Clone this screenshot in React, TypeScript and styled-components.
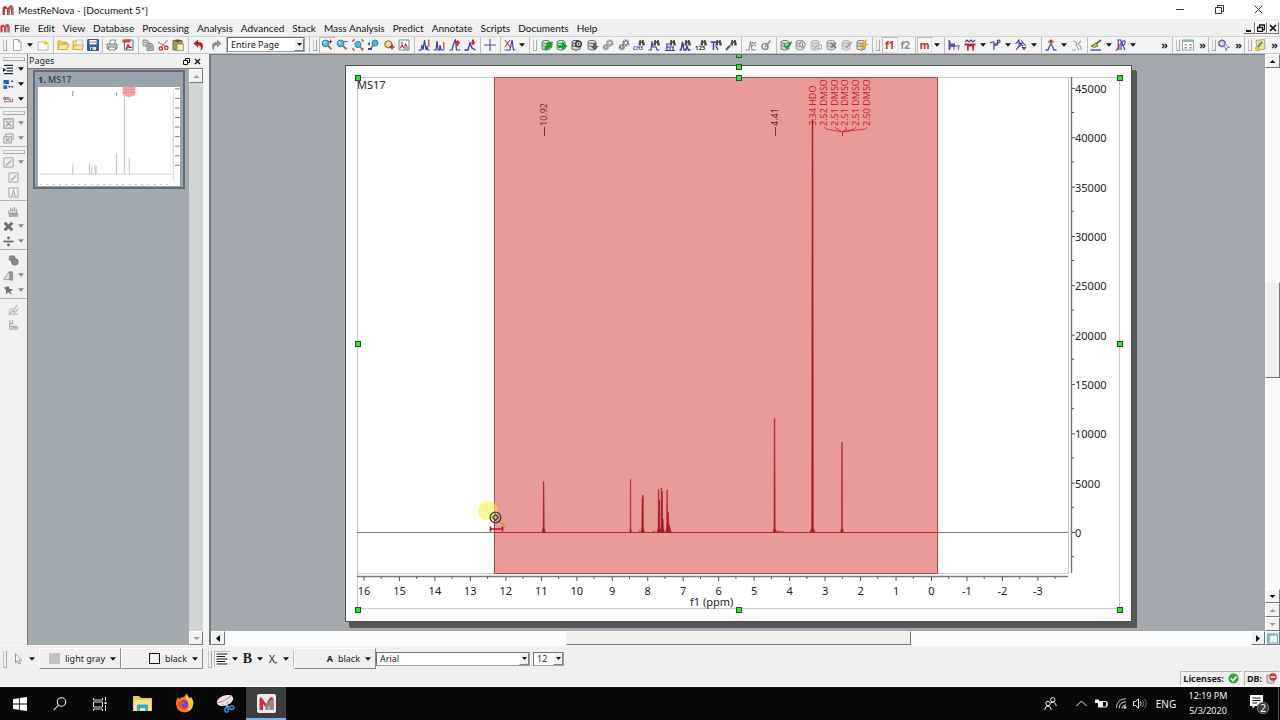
import React from "react";
import styled, { createGlobalStyle, css } from "styled-components";

const Global = createGlobalStyle`
  * { box-sizing: border-box; }
  html, body, #root { height: 100%; }
  body { margin: 0; background: #f0f0f0; color: #1c1c1c; font: 10px/14px "Noto Sans", "Open Sans", sans-serif; overflow: hidden; }
  button, select { font: inherit; color: inherit; margin: 0; padding: 0; border: 0; background: none; }
  svg { display: block; flex: none; }
`;

const BLUE = "#3b3ba8";
const RED = "#c8202a";
const GRAY = "#8d8d8d";
const GREEN = "#1f9c34";

/* ---------- icons ---------- */

const peak = "M0.5 11H3L4 6L5 11L6.5 1L8 11L9 8L10 11H11.5";
const Db = ({ c = "#8c9196" }: { c?: string }) => (
  <g fill="#d9dcde" stroke={c} strokeWidth="0.9">
    <path d="M1 3V10Q5 12.5 9 10V3" />
    <ellipse cx="5" cy="3" rx="4" ry="1.6" />
    <path d="M1 6.5Q5 8.5 9 6.5" fill="none" />
  </g>
);
const Binoc = () => (
  <g fill="#474a4e">
    <path d="M5.5 5L6.5 1H8L8.3 2.5H8.9L9.2 1H10.6L11.8 5V6.5H9.2V4H8V6.5H5.5Z" />
  </g>
);
const Lens = ({ x = 4.6, y = 4.4 }: { x?: number; y?: number }) => (
  <g>
    <path d={`M${x + 2.5} ${y + 2.5}L${x + 6} ${y + 6}`} stroke="#b5622c" strokeWidth="2" />
    <circle cx={x} cy={y} r="3.4" fill="#48bfe0" stroke="#2580a8" />
    <circle cx={x - 1} cy={y - 1} r="1.2" fill="#bdeefa" />
  </g>
);
const Gear = ({ c = GRAY }: { c?: string }) => (
  <g fill="none" stroke={c}>
    <circle cx="7.8" cy="4" r="2.4" strokeWidth="2.4" strokeDasharray="1.8 0.5" />
    <circle cx="3.8" cy="8.2" r="1.9" strokeWidth="2.4" strokeDasharray="1.6 0.4" />
  </g>
);
const line = (d: string, c: string, w = 1.1) => <path d={d} fill="none" stroke={c} strokeWidth={w} />;

const icons: Record<string, React.ReactNode> = {
  doc: <path d="M2.5 0.5H7.5L10 3V11.5H2.5Z M7.5 0.5V3H10" fill="#fff" stroke="#a5a5a5" />,
  newPage: <g><path d="M1 3H9L11 5V11H1Z" fill="#fff" stroke="#b5b5b5" /><path d="M8.5 0.5L9.3 3L11.8 3.4L9.6 5L8.5 7L7.4 5L5.3 3.4L7.7 3Z" fill="#f5d020" /></g>,
  open: <g stroke="#c79a28" strokeWidth="0.8"><path d="M1 10.5V2H4.5L5.5 3.5H10V5" fill="#f7d45a" /><path d="M1 10.5L2.5 5H11.6L10.2 10.5Z" fill="#fbe692" /></g>,
  openRecent: <g stroke="#c79a28" strokeWidth="0.8"><path d="M1 10.5V2H4.5L5.5 3.5H10V5" fill="#f7e08a" /><path d="M1 10.5L2.5 6H11.6L10.2 10.5Z" fill="#fbe692" /><path d="M4.5 1H10V6H4.5Z" fill="#f4f4f0" stroke="#bbb" /></g>,
  save: <g><path d="M0.7 0.7H11.3V11.3H0.7Z" fill="#2d66a8" stroke="#1c4477" /><path d="M2.5 1H9.5V5.5H2.5Z" fill="#fff" /><path d="M3 3H9" stroke="#d26a5a" /><path d="M3 8H9V11H3Z" fill="#dde6ee" /><path d="M4 8.5H5.5V11H4Z" fill="#24507f" /></g>,
  print: <g stroke="#787c80" strokeWidth="0.9"><path d="M3.5 5L4.5 1H9.5L8.5 5" fill="#fff" /><path d="M1 5H11V9.5H1Z" fill="#c3c7ca" /><path d="M2.5 8H9.5V11H2.5Z" fill="#eee" /></g>,
  pdf: <g><path d="M2.5 1H11V11H2.5Z" fill="#fff" stroke="#4b6f9f" /><path d="M0.5 0.5H8.5V3.5H0.5Z" fill="#cf4436" />{line("M4 10Q6 6 6 5Q7 9 10 8.5Q6 8 4 10", RED)}</g>,
  copy: <g stroke="#777" strokeWidth="0.8"><path d="M1 1H5L7 3V7H1Z" fill="#d5d5d5" /><path d="M5 4.5H9.5L11.3 6.5V11.5H5Z" fill="#b9b9b9" /><path d="M6.5 7H9.5M6.5 9H9.5M2.5 3.5H5" /></g>,
  cut: <g fill="none">{line("M1 3L9 8M10.5 1L4.5 8", "#a7878a")}<circle cx="9.3" cy="8.8" r="1.7" stroke={RED} strokeWidth="1.2" /><circle cx="3.8" cy="9.5" r="1.7" stroke={RED} strokeWidth="1.2" /></g>,
  paste: <g><path d="M1 1.5H10V11H1Z" fill="#a79a52" stroke="#6f6a3c" /><path d="M3.5 0.5H7.5V3H3.5Z" fill="#555" /><path d="M5 5H11.5V11.5H5Z" fill="#f2edc2" stroke="#8a8358" strokeWidth="0.7" /></g>,
  undo: <path d="M0.5 4.5L5 0.5V3Q10.5 3 10 8Q9.7 10.5 7.5 11.7Q9 6.5 5 6.3V8.6Z" fill="#b3222b" />,
  redo: <path d="M11.5 4.5L7 0.5V3Q1.5 3 2 8Q2.3 10.5 4.5 11.7Q3 6.5 7 6.3V8.6Z" fill="#8f9294" />,
  zoomIn: <g><Lens /><path d="M9.5 0.5V4.5M7.5 2.5H11.5" stroke={RED} strokeWidth="1.2" /></g>,
  zoomOut: <g><Lens /><path d="M8 2.5H11.5" stroke="#3b6cc0" strokeWidth="1.2" /></g>,
  zoomFit: <g><path d="M1 3V1H3M9 1H11V3M1 9V11H3M9 11H11V9" fill="none" stroke={RED} /><circle cx="6" cy="5.5" r="3" fill="#48bfe0" stroke="#2580a8" />{line("M8 8L10 10", "#b5622c", 1.6)}</g>,
  zoomPrev: <g><circle cx="8" cy="4" r="3" fill="#48bfe0" stroke="#2580a8" />{line("M6 6.5L4 9", "#b5622c", 1.8)}<path d="M0.5 5L3 3V7Z M1 9H5V11H1Z" fill="#2b4d9d" /></g>,
  hand: <g><path d="M4 8.5Q0.5 6 2.5 3.2Q5 0.8 7.5 2.5Q9.5 4.5 8.5 7L6 8.8Z" fill="#f3dfa4" stroke="#a7652c" strokeWidth="1.1" /><path d="M9 5.5V10.5M6.7 8H11.5" stroke={RED} strokeWidth="1.7" /></g>,
  image: <g><path d="M1 1H11V11H1Z" fill="#fff" stroke="#7f858a" /><circle cx="4" cy="4" r="1.6" fill="#74b8d8" />{line("M2 9.5L4 6L6 9L7.5 5L10 9.5", RED)}<path d="M6 7H11V11H6Z" fill="#9fb0a5" /></g>,
  fitPeaks: <g>{line(peak, BLUE, 1.2)}{line("M10.8 0.5V8", RED)}</g>,
  fitSmall: <g>{line("M0.5 11H3L4 2L5 11H6.5L7 6L8 11H11.5", BLUE, 1.2)}{line("M10.8 3V10", RED)}</g>,
  peakUp: <g>{line("M0.5 11H3L4.5 5L6.5 1L7.5 11H11.5", BLUE, 1.2)}<path d="M5.5 4.5L8.5 1L11.5 4.5H9.5V7H7.5V4.5Z" fill={RED} /></g>,
  peakDown: <g>{line("M0.5 11H4L6 4L8 9L11.5 11", BLUE, 1.3)}<path d="M6.5 3H8V0.5H10V3H11.8L9 6.5Z" fill={RED} /></g>,
  cross: <path d="M6 0V12M0 6H12" stroke="#4a4ab6" strokeWidth="1.1" />,
  cutPeaks: <g>{line("M0.5 11H6L8 1L9.5 11H11.5", BLUE, 1.2)}{line("M1 1L6 8M6 1L1 8", "#b5484e")}</g>,
  dbOpen: <g><Db c="#3e8a48" /><path d="M3.5 9L6 4.5V3.5L11.8 2.5L11 9.5L9.3 8Q6.5 11 4 11Z" fill={GREEN} /></g>,
  dbAdd: <g><Db c="#3e8a48" /><path d="M2 6H6V2.5L11.5 7L6 11.5V9H2Z" fill={GREEN} /></g>,
  dbGear: <g><Db c="#444" /><circle cx="7.5" cy="5" r="2.8" fill="#eee" stroke="#333" strokeWidth="1.5" /><circle cx="7.5" cy="5" r="0.9" fill="#333" /></g>,
  dbDown: <g><Db c="#666" /><path d="M6 4H9V7H11.5L7.5 11.5L3.8 7H6Z" fill="#5b5f63" /></g>,
  gears: <Gear />,
  gears2: <Gear c="#7a7d80" />,
  ch3: <g><Binoc /><text x="0" y="11" fontSize="5" fontWeight="700" fill={BLUE}>CH3</text></g>,
  findA: <g><Binoc />{line("M0.5 11H3L4 2L5 8H8L9 11H11.5", BLUE)}</g>,
  findB: <g><Binoc />{line("M1 11.5H11M2 5H5M2 8H10M3 5V11M6 8V11M9 8V11", BLUE)}</g>,
  findC: <g><Binoc />{line("M0.5 11H2L3.5 3L5 11H7L8 7L9.5 11H11.5", BLUE, 1.4)}</g>,
  find123: <g><Binoc /><text x="0" y="11" fontSize="6" fontWeight="700" fill="#333">123</text></g>,
  findT: <g><Binoc />{line("M0.5 3H6M3.5 3V11M6 7L8 11", BLUE, 1.5)}</g>,
  find: <g><Binoc />{line("M1 11L5 6.5", "#55585b", 2)}</g>,
  grayPeak: <g>{line("M0.5 11H4L5.5 2L7 11H11M7 3L11 7M11 3L7 7", GRAY)}</g>,
  grayPen: <g><circle cx="5" cy="7.5" r="3" fill="none" stroke={GRAY} strokeWidth="1.7" />{line("M5 8L10.5 1.5", GRAY, 1.6)}</g>,
  dbOk: <g><Db c="#5f7d63" /><path d="M4 4.5L6.5 7.5L11.5 1.5V5L6.8 10.5L4 7.5Z" fill={GREEN} /></g>,
  dbInfo: <g><Db /><circle cx="7.5" cy="5.5" r="2.8" fill="#eee" stroke="#7c8084" /><path d="M7.5 4V7.5" stroke="#7c8084" /></g>,
  dbPlain: <g><Db c="#b0b3b6" />{line("M4 10L8 6H11.5V10H7", "#aaa")}</g>,
  dbX: <g><Db />{line("M5 4L10 9M10 4L5 9", "#777", 1.5)}</g>,
  dbEdit: <g><Db c="#b0b3b6" />{line("M5 9L11 3", "#999", 1.5)}</g>,
  dbFlash: <g><Db c="#777" /><path d="M10.5 0.5L4.5 6H7.5L5 11.5L11.8 5H9Z" fill="#f0bd22" stroke="#b98613" strokeWidth="0.5" /></g>,
  bars: <g><path d="M0.5 1H2L3 4.5H7V8H3L2 11H0.5Z" fill="#5757b8" /><path d="M7 6H12V8H7Z" fill="#9a9ad0" />{line("M6 11V8M10.5 11V8", "#b45a7a")}</g>,
  multi: <g>{line("M1 3L3 1L5 3L7 1L9 3L11 1", BLUE)}<path d="M0.5 4.5H11.5V6.5H10V11.5H8.3V7.5H4.7V11.5H3V6.5H0.5Z" fill={RED} /></g>,
  integral: <g>{line("M1 4L3 3H5V11M5 6Q9 7 8.5 1.5Q11 0 11 3L7 5L9 6", BLUE, 1.2)}</g>,
  assign: <g>{line("M0.5 5L4 1V7L1 11M4 3L8 7M6 1.5L11 7M4 8L8 3", BLUE)}<path d="M6.5 8H11.5L9 11.5Z" fill={RED} /></g>,
  person: <g>{line("M0.5 11H3L6 4L9 11H11.5", "#3b5aa8", 1.3)}{line("M6 5L3 2M6 5L9 2", "#b38c34")}<circle cx="6" cy="2" r="1.5" fill={RED} /></g>,
  personGray: <g>{line("M2 2Q7 3 5 6L8 11M10 2L7 5Q11 8 10 11M1 11H5", "#a2a2a2", 1.2)}</g>,
  brush: <g><path d="M1 7L6 4L8 7Q4 9 3 8Z" fill="#d2bc3c" stroke="#7c7430" />{line("M6 5L11 1", "#4f6f50", 1.8)}{line("M0.5 11H11", BLUE, 1.3)}</g>,
  waves: <g>{line("M0.5 11H2Q4 9 3 1H6V11M6 6Q11 7 10 2Q8 1 7 4L10 11", BLUE)}{line("M4 11V5", RED)}</g>,
  grid: <g><path d="M0.5 1H11.5V11H0.5Z" fill="#fff" stroke="#8aa0a8" /><path d="M0.5 1H11.5V3H0.5Z" fill="#8cb6bc" /><path d="M2.5 5H5V6.5H2.5Z M7 8H10V9.5H7Z" fill="#e88" /><path d="M7 5H10V6.5H7Z M2.5 8H5V9.5H2.5Z" fill="#68b3a9" /></g>,
  molecule: <g><path d="M4 1L7 2.7V6L4 7.7L1 6V2.7Z" fill="#d8d8ef" stroke="#5757a8" strokeWidth="1.3" /><path d="M6 4L11.5 8.5L9 8.8L8 11.5Z" fill="#fff" stroke="#77779c" strokeWidth="0.9" /></g>,
  note: <g><path d="M2 1.5L10.5 0.5L11 10L3 11.5Z" fill="#efe29b" stroke="#9b9560" strokeWidth="0.8" />{line("M4 8L8 3", "#3d7b9c", 1.8)}<path d="M1 8H6V11.5H1Z" fill="#e1c438" /></g>,
  indent: <path d="M1 1.5H11M4 4.5H11M4 7.5H11M1 10.5H11M0 5L2.5 6.5L0 8Z" stroke="#22303c" strokeWidth="1.4" fill="#22303c" />,
  blocks: <g><path d="M0.5 1H6.5V5.5H0.5Z M0.5 6.7H4.5V11H0.5Z" fill="#1e6bc4" /><path d="M9 2.5H11M9 8.5H11M6 8.5H8" stroke="#1b4b86" strokeWidth="1.8" /></g>,
  dots: <g fill="none" strokeWidth="1.2"><circle cx="2" cy="5" r="1.3" stroke="#b44a60" /><circle cx="5.5" cy="5" r="1.3" stroke="#9a7890" /><path d="M1 8.5H11M8 5V8M10.5 5V8" stroke="#8c7a90" /></g>,
  boxX: <path d="M1 1H11V11H1Z M3 3L9 9M9 3L3 9" fill="none" stroke="#999" strokeWidth="1.2" />,
  boxes: <path d="M3 1H11V8M1 4H9V11H1Z M3 5.5L7 9.5M7 5.5L3 9.5M3 1V4" fill="none" stroke="#999" strokeWidth="1.1" />,
  boxPen: <path d="M1 1H11V11H1Z M3 9L9 3M4 9.5L9.5 4" fill="none" stroke="#a0a0a0" strokeWidth="1" />,
  boxPeak: <path d="M1 1H11V11H1Z M3 9.5H4.5L6 3L7.5 9.5H9" fill="none" stroke="#a0a0a0" strokeWidth="1" />,
  stack: <path d="M0.5 11H11M1 5V8H11M3 2V6M5 3V6M7 1V6M9 3V8M1 9.5H11" fill="none" stroke="#999" strokeWidth="1.2" />,
  bigX: <path d="M3 0.8L6 3.8L9 0.8L11.3 3L8.3 6L11.3 9L9 11.2L6 8.2L3 11.2L0.7 9L3.7 6L0.7 3Z" fill="#6d6d6d" />,
  divide: <g fill="#6d6d6d"><path d="M0.5 5H11.5V7H0.5Z" /><circle cx="6" cy="2.2" r="1.6" /><circle cx="6" cy="9.8" r="1.6" /></g>,
  blob: <g fill="#8a8a8a" stroke="#6e6e6e" strokeWidth="0.8"><path d="M2 1H7L8 5L4 7L1 5Z" /><circle cx="7.5" cy="7.5" r="3.6" /></g>,
  cone: <g strokeWidth="0.9" stroke="#888"><path d="M1 10L7 1.5L8 10Q4 11 1 10Z" fill="#e6e6e6" /><path d="M7.5 2H10.5V11H7.5Z" fill="#999" /></g>,
  pin: <path d="M1 3L6 1L7 4L11 5L8 7L10 11L6 8L3 10L3.5 6Z" fill="#6f6f6f" />,
  graphA: <path d="M0.5 11H11M1 8L4 5L6 7L10 1M1 10L5 8L8 9L11 5" fill="none" stroke="#999" />,
  graphB: <path d="M2 1V11H11M2 5H6M1 8H10M4 9.5H11M5 1V4" fill="none" stroke="#999" />,
  arrow: <path d="M3.5 0.8V9.5L5.6 7.6L7 11L8.4 10.4L7 7.2H9.6Z" fill="#fff" stroke="#8a8a8a" strokeWidth="0.9" />,
  align: <path d="M0.5 1H11.5M0.5 3.5H9M0.5 6H11.5M0.5 8.5H9M0.5 11H11.5" stroke="#111" strokeWidth="1.1" />,
  view: <g><path d="M0.5 1H11.5V11H0.5Z" fill="#eef6fa" stroke="#5b90ad" /><path d="M0.5 1H11.5V3H0.5Z M0.5 3H3.5V11H0.5Z" fill="#8dbbd4" /></g>,
  mnova: (
    <g>
      <path d="M0.5 11V5Q0.5 2 3 2Q5 2 5.8 4.2Q6.8 1 9 1.2Q11.4 1.5 11.5 4.5V11H9V5.5Q8.7 3.8 7.6 5.5V11H5V5.5Q4 3.8 3 5.5V11Z" fill="#d0343c" />
      <path d="M6 11V6Q7 2.7 9 2.8Q11.5 3 11.5 6V11H9.5V6.5H8V11Z" fill="#8b8688" opacity="0.75" />
    </g>
  ),
};

const Icon = ({ name, size = 12 }: { name: string; size?: number }) => (
  <svg width={size} height={size} viewBox="0 0 12 12" aria-hidden="true">{icons[name]}</svg>
);
const Caret = ({ c = "#111" }: { c?: string }) => (
  <svg width="6" height="4" viewBox="0 0 7 4" aria-hidden="true"><path d="M0 0H7L3.5 4Z" fill={c} /></svg>
);
const Tri = ({ dir, c = "#111" }: { dir: "up" | "down" | "left" | "right"; c?: string }) => (
  <svg width="7" height="7" viewBox="0 0 7 7" aria-hidden="true">
    <path fill={c} d={{ up: "M0.5 5H6.5L3.5 2Z", down: "M0.5 2H6.5L3.5 5Z", left: "M5 0V7L1 3.5Z", right: "M2 0V7L6 3.5Z" }[dir]} />
  </svg>
);

/* ---------- frame parts ---------- */

const Window = styled.div`display: flex; flex-direction: column; height: 100vh; min-width: 0;`;
const TitleBar = styled.header`
  display: flex; align-items: center; height: 19px; flex: none; padding: 0 2px; background: #fff;
`;
const Title = styled.h1`margin: 0; padding-left: 4px; font: 400 10px/18px Lato, "Noto Sans", sans-serif; flex: 1; color: #111;`;
const CaptionButton = styled.button`width: 39px; height: 18px; display: flex; align-items: center; justify-content: center;`;
const MenuBar = styled.nav`display: flex; align-items: center; height: 17px; flex: none; padding: 0 1px 0 0; background: #f0f0f0;`;
const Menus = styled.div`display: flex; flex: 1; gap: 8px; padding-left: 4px;`;
const MenuButton = styled.button`font: 400 10px/16px Lato, "Noto Sans", sans-serif; color: #111; white-space: nowrap;`;
const ChildButton = styled.button`
  width: 12px; height: 12px; display: flex; align-items: center; justify-content: center;
  background: #f0f0f0; border: 1px solid; border-color: #fff #777 #777 #fff;
`;
const Toolbar = styled.div`
  display: flex; height: 18px; flex: none; overflow: hidden; background: #f4f4f4; border-top: 1px solid #d2d2d2; border-bottom: 1px solid #c4c4c4;
`;
const Handle = styled.span<{ $flat?: boolean }>`
  flex: none; align-self: stretch; border: 1px solid; border-color: #fff #a9a9a9 #a9a9a9 #c4c4c4;
  ${(p) => p.$flat
    ? css`height: 4px; width: 22px; margin: 3px 0 0 3px; border-color: #c4c4c4 #a9a9a9 #a9a9a9 #c4c4c4;`
    : css`width: 4px; margin: 2px 1px 2px 3px;`}
`;
const Divider = styled.span`flex: 0 0 1px; background: #bdbdbd;`;
const Segment = styled.div<{ $w: number; $last?: boolean }>`
  display: flex; align-items: center; flex: 0 0 ${(p) => p.$w}px; padding: 0 2px 0 1px;
  border-right: ${(p) => (p.$last ? "0" : "1px solid #bdbdbd")};
`;
const ToolButton = styled.button<{ $on?: boolean }>`
  flex: 1 1 0; min-width: 0; height: 16px; display: flex; align-items: center; justify-content: center;
  ${(p) => p.$on && css`background: #fafafa; box-shadow: inset 1px 1px 0 #b9b9b9, inset -1px -1px 0 #e3e3e3;`}
`;
const CaretButton = styled.button`flex: 0 0 10px; height: 14px; display: flex; align-items: center; justify-content: center;`;
const Nucleus = styled.span<{ $c: string }>`font: 700 10px/14px "Noto Sans", sans-serif; color: ${(p) => p.$c};`;
const Combo = styled.label<{ $w: number; $h: number }>`
  display: flex; align-items: stretch; flex: 0 0 ${(p) => p.$w}px; height: ${(p) => p.$h}px; background: #fff;
  border: 1px solid; border-color: #707070 #a0a0a0 #a0a0a0 #707070;
  select { flex: 1; min-width: 0; appearance: none; padding-left: 3px; font-size: 9px; line-height: 12px; outline: 0; }
  span { width: 10px; flex: none; display: flex; align-items: center; justify-content: center; background: #f0f0f0; border: 1px solid; border-color: #fff #808080 #808080 #fff; }
  span svg { width: 5px; height: 3px; }
`;
const More = styled.button<{ $grow?: boolean }>`
  font: 700 11px/12px "Noto Sans", sans-serif; flex: 0 0 12px; text-align: right; padding-right: 2px;
  ${(p) => p.$grow && css`flex: 1 0 12px; padding-right: 4px;`}
`;

/* ---------- workspace ---------- */

const Work = styled.main`display: flex; flex: 1; min-height: 0;`;
const SideTools = styled.div`display: flex; flex-direction: column; flex: 0 0 27px; background: #f1f1f1;`;
const SideGroup = styled.div<{ $plain?: boolean }>`
  display: flex; flex-direction: column; padding: ${(p) => (p.$plain ? 2 : 0)}px 0 1px; border-bottom: 1px solid #b4b4b4;
  &:last-child { border-bottom: 0; }
`;
const SideRow = styled.div<{ $solo?: boolean }>`
  display: flex; align-items: center; height: 14px; margin-top: 1px; padding: 0 1px;
  ${(p) => p.$solo && css`padding: 0 6px;`}
`;
const Panel = styled.section`
  display: flex; flex-direction: column; flex: 0 0 182px; border-left: 1px solid #777; background: #f0f0f0; border-right: 6px solid #f5f5f3;
`;
const PanelHead = styled.div`display: flex; align-items: center; height: 14px; flex: none; padding: 0 1px; gap: 2px;
  h2 { flex: 1; margin: 0; font-size: 9px; line-height: 14px; font-weight: 400; }
`;
const MiniButton = styled.button`width: 9px; height: 10px; display: flex; align-items: center; justify-content: center;`;
const PanelBody = styled.div`display: flex; flex: 1; min-height: 0; border-top: 1px solid #777;`;
const PageList = styled.div`flex: 1; background: #a3abae; padding: 1px 4px 1px 5px;`;
const PageCard = styled.button`
  display: block; width: 100%; padding: 1px 3px; text-align: left; background: #9aa3aa; border: 2px solid #5f6d7d; font-size: 9px; line-height: 14px; color: #25304f;
  svg { width: 100%; height: auto; background: #fff; }
`;
const ScrollV = styled.div<{ $w: number; $bg: string }>`display: flex; flex-direction: column; flex: 0 0 ${(p) => p.$w}px; background: ${(p) => p.$bg};`;
const ScrollButton = styled.button`
  flex: 0 0 14px; min-width: 14px; min-height: 13px; display: flex; align-items: center; justify-content: center; background: #f2f2f2; border: 1px solid; border-color: #fff #777 #777 #fff;
`;
const Track = styled.span<{ $grow: number }>`flex: ${(p) => p.$grow} 1 0;`;
const Thumb = styled.span<{ $grow: number }>`
  flex: ${(p) => p.$grow} 1 0; background: #f0f0ef; border: 1px solid; border-color: #f4f4f4 #777 #777 #f4f4f4;
`;
const Document = styled.section`display: flex; flex: 1; min-width: 0; border-left: 2px solid #73787b;`;
const DocumentMain = styled.div`display: flex; flex-direction: column; flex: 1; min-width: 0;`;
const Canvas = styled.div`
  flex: 1; min-height: 0; overflow: hidden; padding: 10px 133px 0 134px; border-top: 1px solid #777; background: #a3a9ac;
`;
const Sheet = styled.div`
  background: #fff; border: 1px solid #4c4f51; box-shadow: 4px 5px 0 0 #55565a, 5px 6px 0 0 #55565a;
  svg { width: 100%; height: auto; overflow: visible; }
`;
const ScrollH = styled.div`display: flex; flex: 0 0 14px; background: #fbfbfb;`;

/* ---------- bottom bars ---------- */

const FormatBar = styled.div`display: flex; align-items: center; flex: 0 0 26px; background: #f0f0f0; border-top: 1px solid #fafafa;`;
const FormatGroup = styled.div<{ $w?: number }>`
  display: flex; align-items: center; height: 22px; ${(p) => p.$w && css`flex: 0 0 ${p.$w}px;`}
`;
const ColorButton = styled.button`
  flex: 0 0 82px; height: 21px; display: flex; align-items: center; justify-content: flex-end; gap: 5px; padding-right: 4px; font-size: 9px;
  border: 1px solid; border-color: #fff #8a8a8a #8a8a8a #fff;
`;
const Swatch = styled.i<{ $outline?: boolean }>`
  width: 11px; height: 11px; ${(p) => (p.$outline ? css`border: 1px solid #111; background: #f4f4f4;` : css`background: #c2c2c2;`)}
`;
const Glyph = styled.span<{ $serif?: boolean }>`
  font: ${(p) => (p.$serif ? '700 14px/14px "Liberation Serif", serif' : '400 11px/14px "Noto Sans", sans-serif')};
  i { color: ${RED}; font: 700 9px/9px "Noto Sans", sans-serif; }
`;
const StatusBar = styled.footer`display: flex; justify-content: flex-end; flex: 0 0 15px; gap: 2px; background: #f0f0f0; border-bottom: 1px solid #fff;`;
const StatusCell = styled.div`
  display: flex; align-items: center; gap: 4px; padding: 0 2px; font: 700 9px/13px "Noto Sans", sans-serif; border: 1px solid; border-color: #b5b5b5 #fff #fff #b5b5b5;
`;
const Taskbar = styled.footer`display: flex; flex: 0 0 33px; background: #080808; color: #f1f1f1;`;
const TaskButton = styled.button<{ $on?: boolean; $w?: number }>`
  flex: 0 0 ${(p) => p.$w || 40}px; display: flex; align-items: center; justify-content: center;
  ${(p) => p.$on && css`background: #3c3d3f; border-bottom: 2px solid #76b4e2; padding-top: 2px;`}
`;
const Spring = styled.span`flex: 1;`;
const Clock = styled.time`
  width: 58px; padding: 1px 8px 0 0; text-align: center; font-size: 9px; line-height: 15px; white-space: pre;
`;

/* ---------- tool rows ---------- */

type SegProps = { w: number; tools: string[]; last?: boolean };
const label = (s: string) => s.replace(/([A-Z])/g, " $1").toLowerCase();

const Seg = ({ w, tools, last }: SegProps) => (
  <Segment $w={w} $last={last}>
    {tools.map((t, i) =>
      t === "v" ? (
        <CaretButton key={i} aria-label="more options"><Caret /></CaretButton>
      ) : t === "f1" || t === "f2" || t === "m" ? (
        <ToolButton key={i} $on={t !== "f2"}><Nucleus $c={t === "f2" ? GRAY : RED}>{t}</Nucleus></ToolButton>
      ) : (
        <ToolButton key={i} aria-label={label(t)} $on={t === "zoomIn"}><Icon name={t} /></ToolButton>
      )
    )}
  </Segment>
);

const fileSegs: SegProps[] = [
  { w: 46, tools: ["doc", "v", "newPage"] },
  { w: 49, tools: ["open", "openRecent", "save"] },
  { w: 36, tools: ["print", "pdf"] },
  { w: 50, tools: ["copy", "cut", "paste"] },
  { w: 38, tools: ["undo", "redo"] },
];
const viewSegs: SegProps[] = [
  { w: 97, tools: ["zoomIn", "zoomOut", "zoomFit", "zoomPrev", "hand", "image"] },
  { w: 66, tools: ["fitPeaks", "fitSmall", "peakUp", "peakDown"] },
  { w: 20, tools: ["cross"] },
  { w: 29, tools: ["cutPeaks", "v"] },
];
const dbSegs: SegProps[] = [
  { w: 204, tools: ["dbOpen", "dbAdd", "dbGear", "dbDown", "gears", "gears2", "ch3", "findA", "findB", "findC", "find123", "findT", "find"] },
  { w: 35, tools: ["grayPeak", "grayPen"] },
  { w: 96, tools: ["dbOk", "dbInfo", "dbPlain", "dbX", "dbEdit", "dbFlash"] },
];
const nmrSegs: SegProps[] = [
  { w: 35, tools: ["f1", "f2"] },
  { w: 29, tools: ["m", "v"] },
  { w: 97, tools: ["bars", "multi", "v", "integral", "v", "assign", "v"] },
  { w: 46, tools: ["person", "v", "personGray"] },
  { w: 52, tools: ["brush", "v", "waves", "v"], last: true },
];
const menus = ["File", "Edit", "View", "Database", "Processing", "Analysis", "Advanced", "Stack", "Mass Analysis", "Predict", "Annotate", "Scripts", "Documents", "Help"];

const side: { handle: boolean; rows: [string, boolean][] }[] = [
  { handle: true, rows: [["indent", true], ["blocks", true], ["dots", true]] },
  { handle: true, rows: [["boxX", true], ["boxes", true]] },
  { handle: true, rows: [["boxPen", true], ["boxPen", false], ["boxPeak", false]] },
  { handle: false, rows: [["stack", false], ["bigX", true], ["divide", true]] },
  { handle: false, rows: [["blob", false], ["cone", true], ["pin", true]] },
  { handle: false, rows: [["graphA", false], ["graphB", false]] },
];

/* ---------- spectrum ---------- */

const ppmX = (p: number) => 586 - 35.47 * p;
const intY = (v: number) => 467 - v * 0.00987;

const signals: [number, number, number][] = [
  [10.92, 5100, 0.6], [8.47, 5350, 0.3], [8.14, 3500, 0.5], [8.12, 3750, 0.5], [7.68, 4300, 0.5], [7.66, 3200, 0.5],
  [7.6, 4450, 0.5], [7.58, 4100, 0.5], [7.56, 1300, 0.6], [7.44, 4250, 0.5], [7.41, 2000, 0.6], [7.38, 700, 0.7], [4.41, 11500, 0.6], [3.34, 41800, 0.9], [2.51, 9100, 0.5],
];
const trace = signals.map(([p, v, k]) => {
  const x = ppmX(p);
  return `M${x - 3 * k} 467.5L${x - k} 463L${x - k * 0.5} ${intY(v)}H${x + k * 0.5}L${x + k} 463L${x + 3 * k} 467.5Z`;
}).join("");
const dmso: [number, string][] = [[479, "2.52"], [490, "2.51"], [500, "2.51"], [511, "2.51"], [522, "2.50"]];
const range = (a: number, b: number, s: number) => Array.from({ length: Math.round((b - a) / s) + 1 }, (_, i) => a + i * s);
const grips: [number, number][] = [[12, 12], [393, 12], [774, 12], [12, 278], [774, 278], [12, 544], [393, 544], [774, 544], [393, 1], [393, -11]];

const Spectrum = () => (
  <svg viewBox="0 0 785 555" role="img" aria-label="MS17 proton NMR spectrum" fontFamily='"Noto Sans", sans-serif' fontSize="11" fill="#222">
    <g transform="translate(-1 -1)">
      <path d="M12.5 12.5H774.5V543.5H12.5Z M723.5 12.5V508.5H12.5" fill="none" stroke="#c9c9c9" />
      <path d="M12 467.5H723" stroke="#a36b58" />
      <path d="M149.5 12.5H592.5V508.5H149.5Z" fill="#e99b99" stroke="#c23a50" />
      <path d="M149 467.5H592" stroke="#c02a38" />
      <path d={trace} fill="#a81c26" stroke="#a81c26" strokeWidth="0.5" />
      <path d="M294 467V465.5H295M308 467V466H310V467M440 467L430 466L434 467" fill="none" stroke="#c02a38" strokeWidth="0.7" />
      <text x="12" y="24">MS17</text>
      <path d="M726.5 12V508" stroke="#777" strokeWidth="1.4" />
      <path d="M12 511.5H723" stroke="#777" strokeWidth="1.4" />
      {range(0, 45000, 5000).map((v) => (
        <g key={v}>
          <path d={`M727 ${intY(v) + 0.5}h3`} stroke="#555" />
          <text x="730" y={intY(v) + 5}>{v}</text>
        </g>
      ))}
      {range(-2500, 42500, 5000).map((v) => <path key={v} d={`M727 ${intY(v)}h2`} stroke="#555" />)}
      {range(-3, 16, 1).map((p) => (
        <g key={p}>
          <path d={`M${ppmX(p) + 0.5} 512v4`} stroke="#555" />
          <text x={ppmX(p) + 0.5} y="530" textAnchor="middle">{p}</text>
        </g>
      ))}
      {range(-3.5, 15.5, 1).map((p) => <path key={p} d={`M${ppmX(p)} 512v2`} stroke="#555" />)}
      <text x="345" y="541">f1 (ppm)</text>
      <g fontSize="9" fill="#8b2050">
        <text transform="translate(202 61) rotate(-90)">10.92</text>
        <path d="M199.5 62V71" stroke="#8b2050" />
        <text transform="translate(433 61) rotate(-90)" fill="#701a2c">4.41</text>
        <path d="M430.5 62V71" stroke="#8b2a3c" />
      </g>
      <g fontSize="9" fill="#d11c2c" stroke="none">
        <text transform="translate(471 61) rotate(-90)">3.34 HDO</text>
        {dmso.map(([x, v], i) => (
          <g key={i}>
            <text transform={`translate(${x + 3} 61) rotate(-90)`}>{v} DMSO</text>
            <path d={`M${x} 62L${x + (i < 3 ? 2 : -2)} 64L497.5 67V71`} fill="none" stroke="#d11c2c" strokeWidth="0.8" />
          </g>
        ))}
      </g>
      <circle cx="143" cy="446" r="10" fill="#f7f33c" opacity="0.55" />
      <path d="M145 464H157M145.5 461.5V466.5M157.5 461.5V466.5" stroke="#b3132a" strokeWidth="1.6" />
      <path d="M155 457L161 462" stroke="#c9a03a" strokeWidth="2" />
      <circle cx="150.5" cy="452.5" r="5.3" fill="none" stroke="#3c3638" strokeWidth="1.3" />
      <path d="M150.5 449.5L153.5 452.5L150.5 455.5L147.5 452.5Z" fill="none" stroke="#3c3638" strokeWidth="1.2" />
      {grips.map(([x, y]) => <rect key={`${x},${y}`} x={x - 1.5} y={y - 1.5} width="5" height="5" fill="#3be03b" stroke="#155c18" />)}
    </g>
  </svg>
);

const Thumbnail = () => (
  <svg viewBox="0 0 787 550" role="img" aria-label="Thumbnail of page 1">
    <path d="M12 483H755M750 10V525" stroke="#c5c5c5" strokeWidth="4" fill="none" />
    {range(0, 8, 1).map((i) => <path key={i} d={`M758 ${10 + i * 53}H785`} stroke="#777" strokeWidth="5" />)}
    {range(0, 20, 1).map((i) => <path key={i} d={`M${12 + i * 35} 540h10`} stroke="#aaa" strokeWidth="5" />)}
    {([[193, 430], [285, 425], [298, 446], [316, 433], [322, 438], [435, 368], [478, 50], [506, 390]] as const).map(([x, y]) => (
      <path key={x} d={`M${x} 483V${y}`} stroke="#aaa" strokeWidth="4" />
    ))}
    <path d="M193 22V50M435 30V48" stroke="#778" strokeWidth="5" />
    <path d="M470 0H540V45L505 58L470 45Z" fill="#f3a5a5" />
    <path d="M472 15H538M472 30H538" stroke="#dc6c72" strokeWidth="4" strokeDasharray="8 4" />
  </svg>
);

/* ---------- page ---------- */

export default function App() {
  return (
    <Window>
      <Global />
      <TitleBar>
        <Icon name="mnova" />
        <Title>MestReNova - [Document 5*]</Title>
        <CaptionButton aria-label="Minimize"><svg width="9" height="9"><path d="M0 4.5H8" stroke="#333" /></svg></CaptionButton>
        <CaptionButton aria-label="Restore"><svg width="9" height="9"><path d="M0.5 2.5H6.5V8.5H0.5Z M2.5 2.5V0.5H8.5V6.5H6.5" fill="none" stroke="#333" /></svg></CaptionButton>
        <CaptionButton aria-label="Close"><svg width="9" height="9"><path d="M0.5 0.5L8.5 8.5M8.5 0.5L0.5 8.5" stroke="#333" /></svg></CaptionButton>
      </TitleBar>
      <MenuBar>
        <Icon name="mnova" size={10} />
        <Menus>{menus.map((m) => <MenuButton key={m}>{m}</MenuButton>)}</Menus>
        <ChildButton aria-label="Minimize document"><svg width="8" height="8"><path d="M1 7H6" stroke="#111" strokeWidth="2" /></svg></ChildButton>
        <ChildButton aria-label="Restore document"><svg width="8" height="8"><path d="M0.5 3.5H5.5V7.5H0.5Z M2.5 3V1H7.5V5.5H6" fill="none" stroke="#111" strokeWidth="1.3" /></svg></ChildButton>
        <ChildButton aria-label="Close document"><svg width="8" height="8"><path d="M1 1L7 7M7 1L1 7" stroke="#111" strokeWidth="1.6" /></svg></ChildButton>
      </MenuBar>
      <Toolbar role="toolbar">
        <Handle />
        {fileSegs.map((s, i) => <Seg key={i} {...s} />)}
        <Combo $w={78} $h={15}>
          <select aria-label="Zoom" defaultValue="Entire Page"><option>Entire Page</option></select>
          <span><Caret /></span>
        </Combo>
        <Segment $w={5} />
        <Handle />
        {viewSegs.map((s, i) => <Seg key={i} {...s} />)}
        <Handle />
        {dbSegs.map((s, i) => <Seg key={i} {...s} />)}
        <Handle />
        {nmrSegs.map((s, i) => <Seg key={i} {...s} />)}
        <More $grow aria-label="More processing tools">»</More>
        {["grid", "molecule", "note"].map((t) => (
          <React.Fragment key={t}>
            <Divider />
            <Handle />
            <Seg w={15} tools={[t]} last />
            <More aria-label={`More ${t} tools`}>»</More>
          </React.Fragment>
        ))}
      </Toolbar>
      <Work>
        <SideTools>
          {side.map((g, i) => (
            <SideGroup key={i} $plain={!g.handle}>
              {g.handle ? <Handle $flat /> : null}
              {g.rows.map(([name, menu], j) => (
                <SideRow key={j} $solo={!menu}>
                  <ToolButton aria-label={label(name)}><Icon name={name} size={11} /></ToolButton>
                  {menu && <CaretButton aria-label={`${label(name)} options`}><Caret c={i === 0 ? "#111" : "#888"} /></CaretButton>}
                </SideRow>
              ))}
            </SideGroup>
          ))}
        </SideTools>
        <Panel>
          <PanelHead>
            <h2>Pages</h2>
            <MiniButton aria-label="Float panel"><svg width="7" height="7"><path d="M0.5 2.5H4.5V6.5H0.5Z M2.5 2V0.5H6.5V4.5H5" fill="none" stroke="#111" /></svg></MiniButton>
            <MiniButton aria-label="Close panel"><svg width="7" height="7"><path d="M1 1L6 6M6 1L1 6" stroke="#111" strokeWidth="1.3" /></svg></MiniButton>
          </PanelHead>
          <PanelBody>
            <PageList>
              <PageCard><b>1.</b> MS17<Thumbnail /></PageCard>
            </PageList>
            <ScrollV $w={14} $bg="#d0d6d7">
              <ScrollButton aria-label="Scroll pages up"><Tri dir="up" c="#999" /></ScrollButton>
              <Track $grow={1} />
              <ScrollButton aria-label="Scroll pages down"><Tri dir="down" c="#999" /></ScrollButton>
            </ScrollV>
          </PanelBody>
        </Panel>
        <Document>
          <DocumentMain>
            <Canvas><Sheet><Spectrum /></Sheet></Canvas>
            <ScrollH>
              <ScrollButton aria-label="Scroll left"><Tri dir="left" /></ScrollButton>
              <Track $grow={342} /><Thumb $grow={343} /><Track $grow={341} />
              <ScrollButton aria-label="Scroll right"><Tri dir="right" /></ScrollButton>
            </ScrollH>
          </DocumentMain>
          <ScrollV $w={15} $bg="#fafafa">
            <ScrollButton aria-label="Scroll up"><Tri dir="up" /></ScrollButton>
            <Track $grow={215} /><Thumb $grow={94} /><Track $grow={212} />
            <ScrollButton aria-label="Scroll down"><Tri dir="down" /></ScrollButton>
            <ScrollButton aria-label="Previous page"><Tri dir="up" c="#999" /></ScrollButton>
            <ScrollButton aria-label="Next page"><Tri dir="down" c="#999" /></ScrollButton>
            <ScrollButton aria-label="Page view"><Icon name="view" size={11} /></ScrollButton>
          </ScrollV>
        </Document>
      </Work>
      <FormatBar role="toolbar">
        <FormatGroup $w={205}>
          <Handle />
          <Segment $w={31} $last>
            <ToolButton aria-label="Select"><Icon name="arrow" /></ToolButton>
            <CaretButton aria-label="Selection modes"><Caret /></CaretButton>
          </Segment>
          <ColorButton><Swatch />light gray<Caret /></ColorButton>
          <ColorButton><Swatch $outline />black<Caret /></ColorButton>
        </FormatGroup>
        <FormatGroup>
          <Handle />
          <Segment $w={81}>
            <ToolButton $on aria-label="Alignment"><Icon name="align" /></ToolButton>
            <CaretButton aria-label="Alignment options"><Caret /></CaretButton>
            <ToolButton><Glyph $serif>B</Glyph></ToolButton>
            <CaretButton aria-label="Bold options"><Caret /></CaretButton>
            <ToolButton><Glyph>X<i>,</i></Glyph></ToolButton>
            <CaretButton aria-label="Script options"><Caret /></CaretButton>
          </Segment>
          <ColorButton><b>A</b> black<Caret /></ColorButton>
          <Combo $w={154} $h={14}>
            <select aria-label="Font" defaultValue="Arial"><option>Arial</option></select>
            <span><Caret /></span>
          </Combo>
          <Segment $w={3} $last />
          <Combo $w={31} $h={14}>
            <select aria-label="Font size" defaultValue="12"><option>12</option></select>
            <span><Caret /></span>
          </Combo>
        </FormatGroup>
      </FormatBar>
      <StatusBar>
        <StatusCell>
          Licenses:
          <svg width="11" height="11" viewBox="0 0 11 11"><circle cx="5.5" cy="5.5" r="5" fill="#35a335" /><path d="M2.7 5.3L5 7.8L8.5 3.4" fill="none" stroke="#fff" strokeWidth="1.6" /></svg>
        </StatusCell>
        <StatusCell>
          DB:
          <svg width="11" height="11" viewBox="0 0 11 11"><path d="M1 2V9.5Q5 11.5 8 9.5V2Z" fill="#ddd" stroke="#888" /><circle cx="7" cy="4" r="3.8" fill="#d62e38" /><path d="M4.5 4H9.5" stroke="#fff" strokeWidth="1.5" /></svg>
        </StatusCell>
      </StatusBar>
      <Taskbar>
        <TaskButton aria-label="Start"><svg width="14" height="14" viewBox="0 0 14 14"><path d="M0 2L6 1.2V6.6H0Z M6.8 1.1L14 0V6.6H6.8Z M0 7.4H6V12.8L0 12Z M6.8 7.4H14V14L6.8 12.9Z" fill="#fff" /></svg></TaskButton>
        <TaskButton aria-label="Search"><svg width="14" height="14" viewBox="0 0 14 14"><circle cx="8.5" cy="5" r="4.2" fill="none" stroke="#eee" strokeWidth="1.1" /><path d="M5.5 8L0.8 13.2" stroke="#eee" strokeWidth="1.1" /></svg></TaskButton>
        <TaskButton aria-label="Task view"><svg width="14" height="14" viewBox="0 0 14 14"><path d="M0.5 1V3H9.5V1M0.5 5H9.5V10H0.5Z M0.5 14V12H9.5V14M12.5 0V4M12.5 8V14" fill="none" stroke="#ddd" /><path d="M11.5 5H13.5V7H11.5Z" fill="#eee" /></svg></TaskButton>
        <TaskButton $w={44} aria-label="File explorer"><svg width="19" height="16" viewBox="0 0 19 16"><path d="M0 15V1Q0 0 1 0H6L8 2H18Q19 2 19 3V15Z" fill="#f0c852" /><path d="M1 4H18V15H1Z" fill="#fbe394" /><path d="M4 15V9.5Q4 8.5 5 8.5H14Q15 8.5 15 9.5V15H12V12H7V15Z" fill="#3aa8cf" /></svg></TaskButton>
        <TaskButton aria-label="Firefox"><svg width="19" height="19" viewBox="0 0 19 19"><path d="M1 10Q0.5 6 3 3L4 5Q7 2.5 9 3Q10 1 12 0Q12 2.5 15 4.5L16 3Q18.6 6.5 18.3 10Q17.5 18 9.5 18.5Q2 18 1 10Z" fill="#ff7426" /><path d="M12 0Q12 2.5 15 4.5L16 3Q19 7 18 11Q17 16 12 17Q15 12 12 8Q9 5 12 0Z" fill="#ffc52e" /><circle cx="9.3" cy="10" r="4" fill="#7444c2" /><path d="M3 9Q5 6 9 8Q11 9 8.5 10Q6 10.5 7 12.5Q9 15 12.5 13Q11 17 6.5 15Q3 13 3 9Z" fill="#f4443a" /></svg></TaskButton>
        <TaskButton $w={42} aria-label="Snipping tool"><svg width="19" height="19" viewBox="0 0 19 19"><ellipse cx="9" cy="6.5" rx="8.5" ry="5" transform="rotate(-20 9 6.5)" fill="#e9e3e7" /><path d="M1 9Q9 8 16 1" stroke="#c8727e" fill="none" /><path d="M6 10L13 13M12 7L10.5 14" stroke="#aab3bb" strokeWidth="1.3" /><g fill="none" stroke="#2583c8" strokeWidth="1.7"><ellipse cx="10.5" cy="16" rx="1.7" ry="2.2" /><ellipse cx="15.5" cy="13.5" rx="2.3" ry="1.7" /></g></svg></TaskButton>
        <TaskButton $on aria-label="MestReNova"><svg width="19" height="19" viewBox="0 0 19 19"><rect width="19" height="19" rx="2" fill="#ecebec" /><path d="M2.5 16V5Q2.5 3 4.5 3.2L9 10L13 3.5Q16.5 2.5 16.5 5.5V16H12.5V10L9.5 14.5L6 10V16Z" fill="#cf2d36" /><path d="M8.5 16V11L13 6Q16.5 5 16.5 8V16H13V11L11.5 13V16Z" fill="#8d898b" /></svg></TaskButton>
        <Spring />
        <TaskButton $w={42} aria-label="People"><svg width="13" height="13" viewBox="0 0 13 13" fill="none" stroke="#eee"><circle cx="8.8" cy="2.8" r="2.2" /><circle cx="4" cy="6.5" r="2.2" /><path d="M0.8 13Q1 9 4 9Q7 9 7.2 13M6.5 6Q8 5 9.5 5.3Q12 6 12.3 9" /></svg></TaskButton>
        <TaskButton $w={20} aria-label="Show hidden icons"><svg width="11" height="7"><path d="M0.5 6L5.5 1L10.5 6" fill="none" stroke="#eee" /></svg></TaskButton>
        <TaskButton $w={20} aria-label="Battery"><svg width="13" height="9" viewBox="0 0 13 9"><path d="M1.5 2.5H11.5V8H3M11.5 4H12.8V6.5H11.5" fill="none" stroke="#eee" /><path d="M4 3H8V8H3V4H4Z M0 0.5H4V4H0Z" fill="#eee" /></svg></TaskButton>
        <TaskButton $w={20} aria-label="Network"><svg width="11" height="11" viewBox="0 0 11 11" fill="none" stroke="#ccc"><path d="M0.5 10Q0.5 1 10 0.7M3.2 10.3Q3.2 4 10 3.7M6 10.5Q6.2 7 10 6.7" /><circle cx="9" cy="9.5" r="1" fill="#eee" /></svg></TaskButton>
        <TaskButton $w={18} aria-label="Volume"><svg width="14" height="11" viewBox="0 0 14 11" fill="none" stroke="#eee"><path d="M0.5 3.5H2.5L5.5 0.8V10.2L2.5 7.5H0.5Z" /><path d="M7.5 3.5Q9 5.5 7.5 7.5" /><path d="M9.5 2Q12 5.5 9.5 9M11.5 0.8Q15 5.5 11.5 10.2" stroke="#777" /></svg></TaskButton>
        <TaskButton $w={34}>ENG</TaskButton>
        <Clock>{"12:19 PM\n5/3/2020"}</Clock>
        <TaskButton $w={36} aria-label="2 notifications">
          <svg width="20" height="20" viewBox="0 0 20 20"><path d="M1 1H14V12H6L3.5 14.5V12H1Z" fill="#fff" /><path d="M3.5 4H11.5M3.5 6.5H11.5M3.5 9H8" stroke="#111" /><circle cx="14" cy="14" r="5.8" fill="#3b3d40" stroke="#777" /><text x="14" y="17.5" fontSize="10" textAnchor="middle" fill="#fff" fontFamily='"Noto Sans", sans-serif'>2</text></svg>
        </TaskButton>
        <TaskButton $w={3} aria-label="Show desktop"><svg width="1" height="33"><path d="M0.5 0V33" stroke="#555" /></svg></TaskButton>
      </Taskbar>
    </Window>
  );
}
